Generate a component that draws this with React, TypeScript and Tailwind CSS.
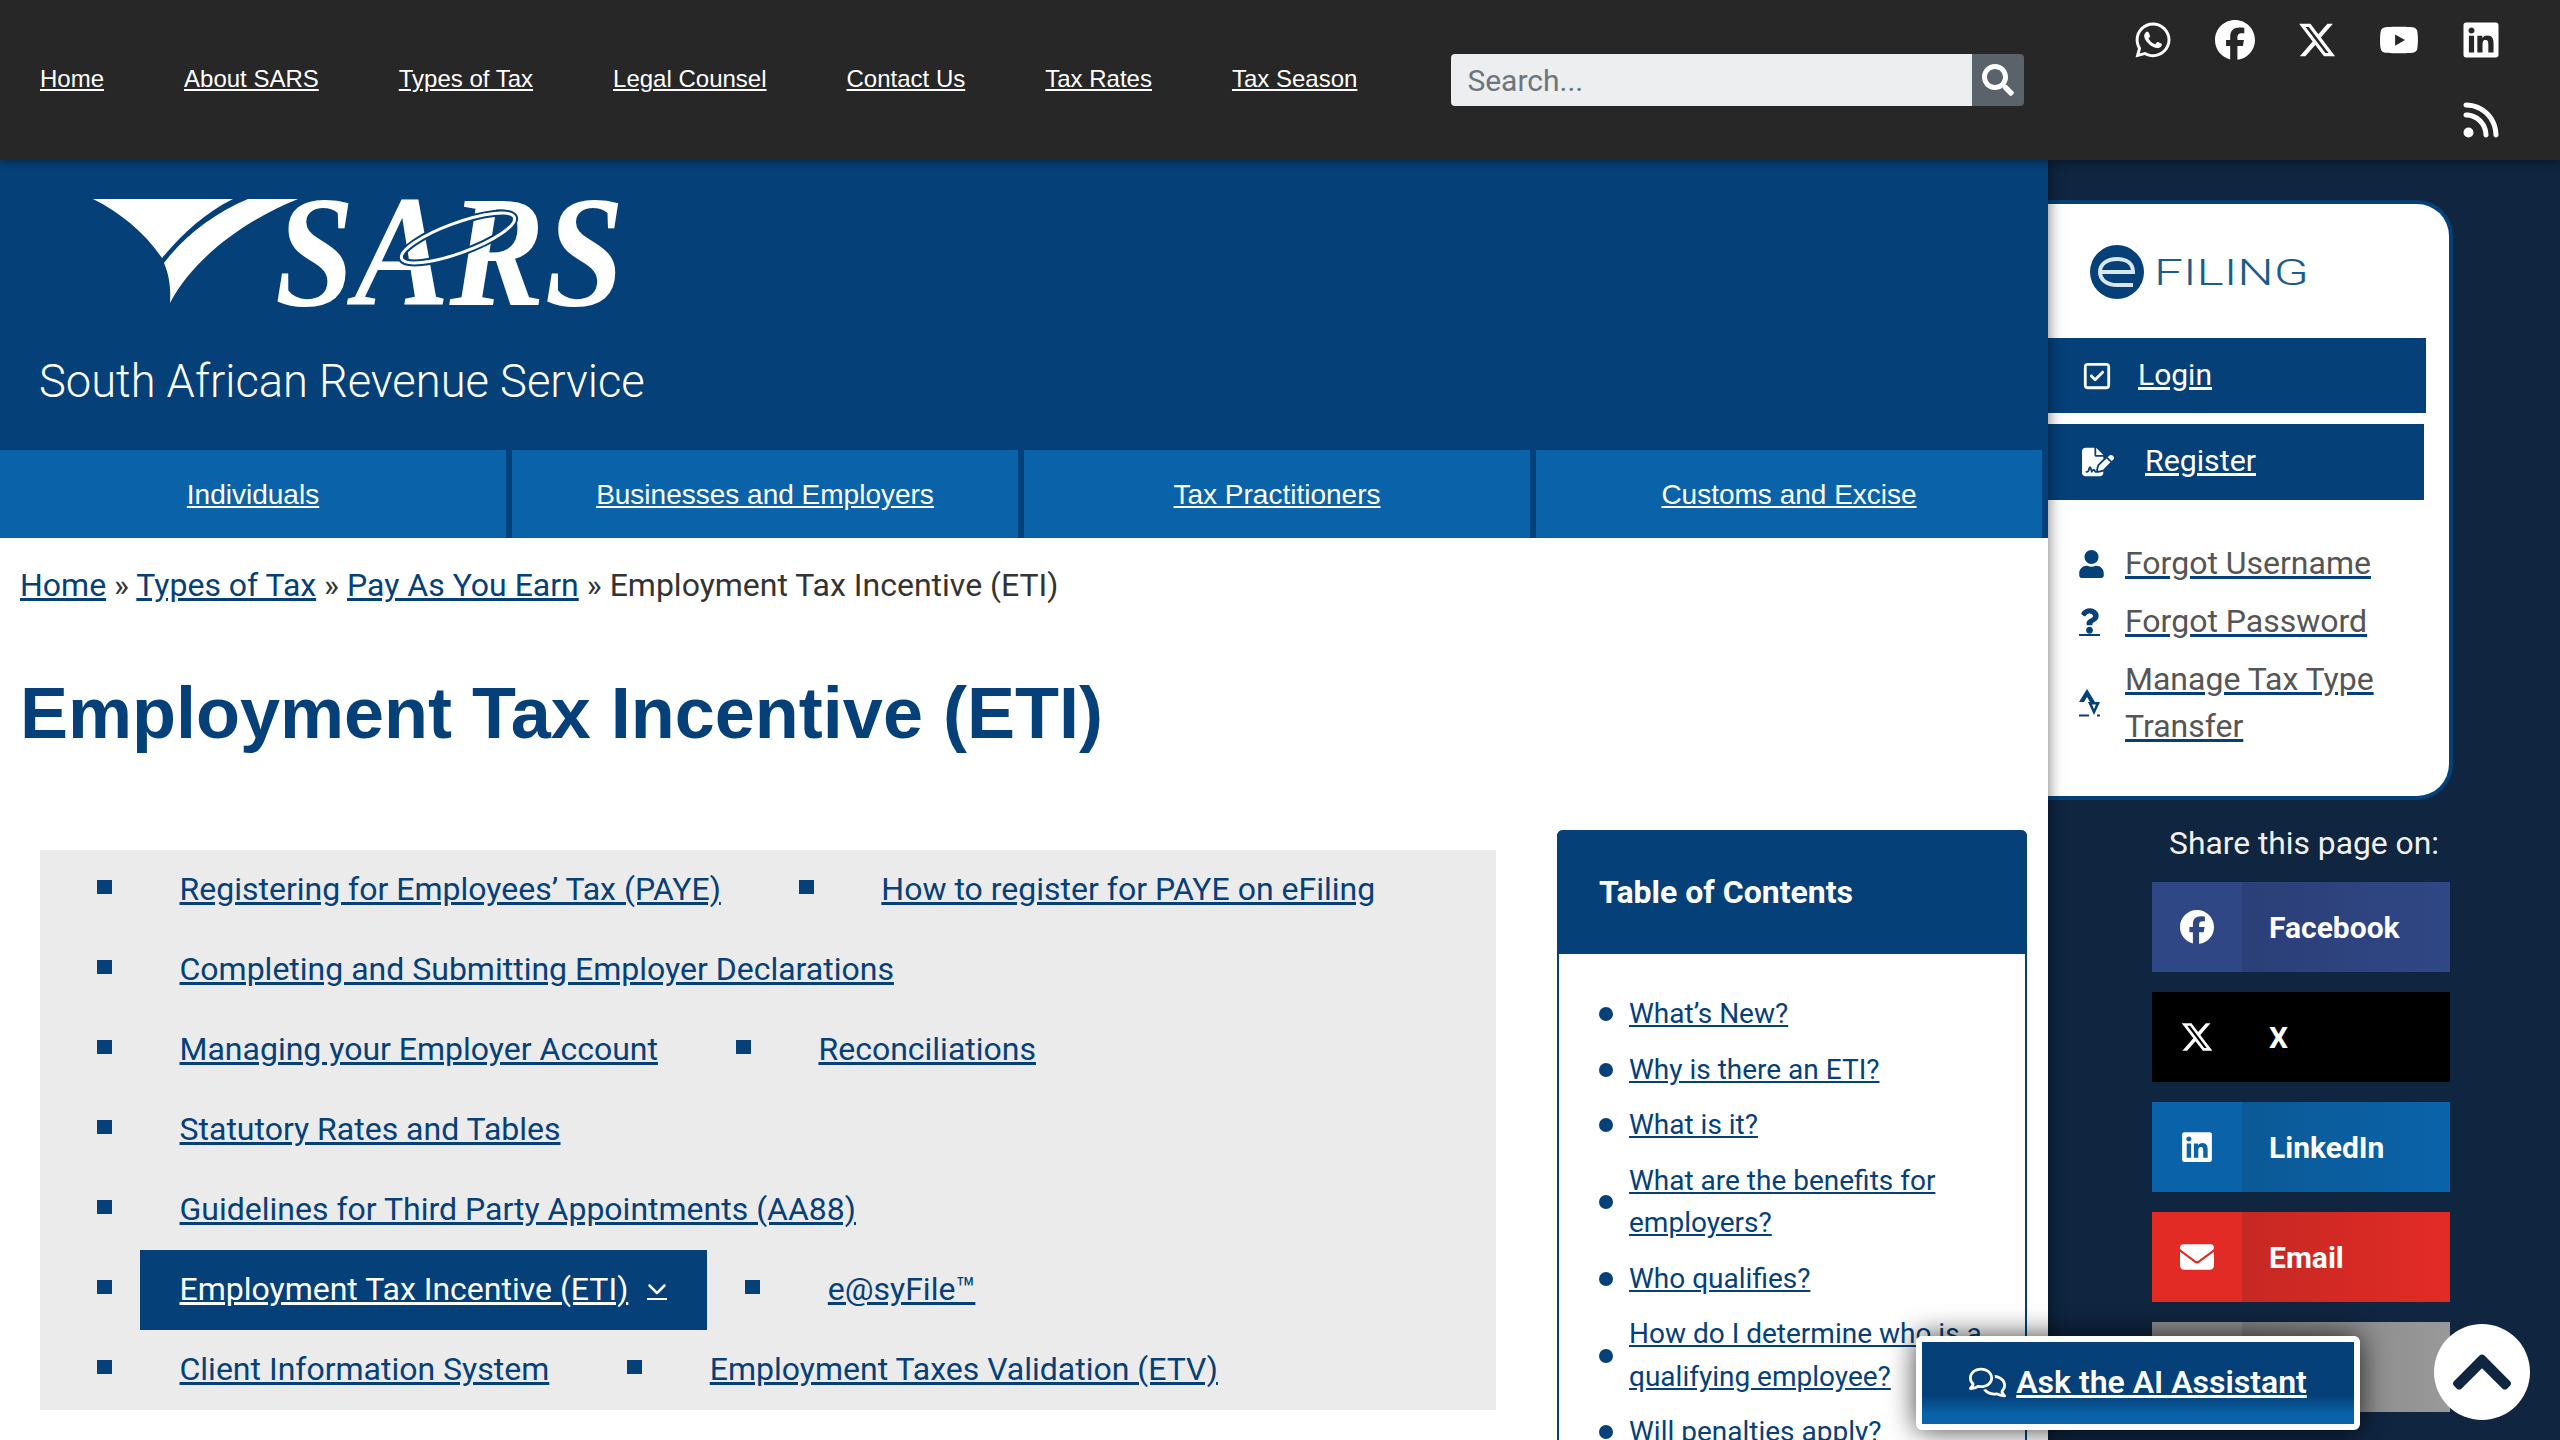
import { FaWhatsapp, FaFacebook, FaXTwitter, FaYoutube, FaLinkedin, FaRss, FaRegSquareCheck, FaFileSignature, FaEnvelope, FaRegComments, FaChevronDown } from 'react-icons/fa6'
import { FaSearch, FaUser, FaQuestion, FaChevronUp } from 'react-icons/fa'

const topLinks = ['Home', 'About SARS', 'Types of Tax', 'Legal Counsel', 'Contact Us', 'Tax Rates', 'Tax Season']
const mainNav = ['Individuals', 'Businesses and Employers', 'Tax Practitioners', 'Customs and Excise']

const subNav = [
  ['Registering for Employees’ Tax (PAYE)', 'How to register for PAYE on eFiling'],
  ['Completing and Submitting Employer Declarations'],
  ['Managing your Employer Account', 'Reconciliations'],
  ['Statutory Rates and Tables'],
  ['Guidelines for Third Party Appointments (AA88)'],
  ['Employment Tax Incentive (ETI)', 'e@syFile™'],
  ['Client Information System', 'Employment Taxes Validation (ETV)'],
]

const toc = [
  'What’s New?',
  'Why is there an ETI?',
  'What is it?',
  'What are the benefits for employers?',
  'Who qualifies?',
  'How do I determine who is a qualifying employee?',
  'Will penalties apply?',
]

function SarsLogo() {
  return (
    <svg width="540" height="112" viewBox="0 0 540 112" className="block overflow-visible">
      <path d="M0 0 H140 C112 14 90 34 69 59 C52 34 28 14 0 0 Z" fill="#fff" />
      <path d="M155 0 H205 C150 22 100 60 77 104 C78 88 76 76 71 64 C92 36 122 14 155 0 Z" fill="#fff" />
      <text x="182" y="106" fontFamily="Liberation Serif" fontStyle="italic" fontWeight="700" fontSize="158" fill="#fff" textLength="349" lengthAdjust="spacingAndGlyphs">SARS</text>
      <ellipse cx="365" cy="39" rx="60" ry="15" transform="rotate(-20 365 39)" fill="none" stroke="#054078" strokeWidth="7" />
      <ellipse cx="365" cy="39" rx="60" ry="15" transform="rotate(-20 365 39)" fill="none" stroke="#fff" strokeWidth="3" />
    </svg>
  )
}

function EfilingLogo() {
  return (
    <svg width="222" height="56" viewBox="0 0 222 56" className="block">
      <circle cx="27" cy="28" r="27" fill="#054078" />
      <path d="M11 28 H43 C43 19 36 15 27 15 C17 15 10 20 10 28 C10 36 17 41 27 41 H43" fill="none" stroke="#d8e6f0" strokeWidth="4" />
      <text x="64" y="41" fontFamily="Roboto" fontWeight="300" fontSize="36" fill="#1b5c8c" textLength="155" lengthAdjust="spacingAndGlyphs">FILING</text>
    </svg>
  )
}

function TransferIcon() {
  return (
    <svg width="21" height="28" viewBox="0 0 21 28" className="block">
      <path d="M8 0 L16 13 H11 L8 8 L5 13 H0 Z" fill="#054078" />
      <path d="M9 13 H21 L15 26 Z M13 15.5 L15 20 L17 15.5 Z" fill="#054078" fillRule="evenodd" />
      <path d="M0 26.5 H10 M18 26.5 H21" stroke="#054078" strokeWidth="2" />
    </svg>
  )
}

function ShareButton({ label, icon, cell, labelBg }: { label: string; icon: React.ReactNode; cell: string; labelBg: string }) {
  return (
    <div className="flex h-[90px] w-[298px] items-center text-white">
      <div className={`flex h-full w-[90px] items-center justify-center text-[34px] ${cell}`}>{icon}</div>
      <span className={`flex h-full flex-1 items-center pl-[27px] text-[30px] font-bold ${labelBg}`}>{label}</span>
    </div>
  )
}

export default function App() {
  return (
    <div className="relative flex h-screen w-full flex-col overflow-hidden bg-[#0f2540] [font-family:Roboto,sans-serif]">
      {/* top bar */}
      <header className="relative z-20 flex h-[160px] shrink-0 bg-[#272727] shadow-[0_2px_8px_rgba(0,0,0,0.4)]">
        <nav className="flex h-full items-center gap-[80px] pb-[2px] pl-[40px] [font-family:'Liberation_Sans',sans-serif]">
          {topLinks.map((l) => (
            <a key={l} className="whitespace-nowrap text-[24px] text-white underline">{l}</a>
          ))}
        </nav>
        <div className="ml-[94px] mt-[54px] flex h-[52px] w-[573px] overflow-hidden rounded-[4px]">
          <input placeholder="Search..." className="h-full min-w-0 flex-1 bg-[#eceef0] pl-[16px] text-[30px] placeholder:text-[#6c757d]" />
          <div className="flex h-full w-[52px] items-center justify-center bg-[#5a626a] text-[32px] text-white">
            <FaSearch />
          </div>
        </div>
        <div className="ml-auto mr-[38px] flex w-[410px] flex-wrap justify-end text-[40px] text-white">
          {[FaWhatsapp, FaFacebook, FaXTwitter, FaYoutube, FaLinkedin, FaRss].map((Icon, i) => (
            <div key={i} className="flex h-[79px] w-[82px] items-center justify-center">
              <Icon />
            </div>
          ))}
        </div>
      </header>

      <div className="flex min-h-0 flex-1">
        {/* main column */}
        <main className="relative z-10 w-[2048px] shrink-0 bg-white shadow-[0_0_14px_rgba(0,0,0,0.55)]">
          <div className="h-[290px] bg-[#054078] pl-[39px] pt-[39px]">
            <div className="ml-[54px]">
              <SarsLogo />
            </div>
            <p className="mt-[41px] text-[45.3px] font-light leading-[60px] text-white">South African Revenue Service</p>
          </div>
          <div className="flex h-[88px] gap-[6px] bg-[#054078] pr-[6px] [font-family:'Liberation_Sans',sans-serif]">
            {mainNav.map((l) => (
              <a key={l} className="flex flex-1 items-center justify-center bg-[#0a63a9] pt-[2px] text-[28px] text-white underline">{l}</a>
            ))}
          </div>

          <p className="ml-[20px] mt-[28px] text-[32px] leading-[38px] text-[#333]">
            <a className="text-[#054078] underline">Home</a> » <a className="text-[#054078] underline">Types of Tax</a> » <a className="text-[#054078] underline">Pay As You Earn</a> » Employment Tax Incentive (ETI)
          </p>
          <h1 className="ml-[20px] mt-[59px] text-[72px] font-bold leading-[100px] text-[#054078] [font-family:'Liberation_Sans',sans-serif]">Employment Tax Incentive (ETI)</h1>

          <div className="mt-[87px] flex items-start">
            <div className="ml-[40px] h-[560px] w-[1456px] shrink-0 bg-[#ebebeb] pl-[57px]">
              {subNav.map((row) => (
                <div key={row[0]} className="flex h-[80px] items-center">
                  {row.map((item) => {
                    const active = item === 'Employment Tax Incentive (ETI)'
                    return (
                      <div key={item} className="mr-[38px] flex h-full items-center">
                        <span className="mb-[6px] mr-[27.5px] h-[14px] w-[15px] bg-[#054078]" />
                        <a className={`flex h-full items-center whitespace-nowrap px-[40px] pb-[2px] text-[32px] underline ${active ? 'bg-[#054078] text-white' : 'text-[#054078]'}`}>
                          {item}
                          {active && (
                            <span className="ml-[19px] border-b-2 border-white text-[20px]">
                              <FaChevronDown />
                            </span>
                          )}
                        </a>
                      </div>
                    )
                  })}
                </div>
              ))}
            </div>

            <aside className="-mt-[20px] ml-[61px] w-[470px] shrink-0 rounded-t-[6px] border-x-2 border-[#054078] pb-[40px]">
              <div className="-mx-[2px] flex h-[124px] items-center rounded-t-[6px] bg-[#054078] pl-[42px] text-[32px] font-bold text-white">Table of Contents</div>
              <ul className="ml-[40px] mr-[20px] mt-[39px] flex flex-col gap-[13px]">
                {toc.map((t) => (
                  <li key={t} className="flex items-center">
                    <span className="mr-[16px] h-[14px] w-[14px] shrink-0 rounded-full bg-[#054078]" />
                    <a className="text-[28px] leading-[42.5px] text-[#054078] underline">{t}</a>
                  </li>
                ))}
              </ul>
            </aside>
          </div>
        </main>

        {/* right column */}
        <div className="flex-1">
          <div className="mt-[40px] h-[600px] w-[405px] rounded-r-[36px] border-y-4 border-r-4 border-[#054078] bg-white">
            <div className="pl-[42px] pt-[40px]">
              <EfilingLogo />
            </div>
            <a className="mt-[38px] flex h-[75px] w-[378px] items-center bg-[#054078] pl-[34px] text-[30px] text-white">
              <FaRegSquareCheck className="text-[30px]" />
              <span className="mb-[2px] ml-[26px] underline">Login</span>
            </a>
            <a className="mt-[11px] flex h-[76px] w-[376px] items-center bg-[#054078] pl-[34px] text-[30px] text-white">
              <FaFileSignature className="text-[32px]" />
              <span className="mb-[3px] ml-[31px] text-[30.3px] underline">Register</span>
            </a>
            <ul className="ml-[31px] mt-[40px] flex flex-col gap-[11px] text-[32px] leading-[47px] text-[#555]">
              <li className="flex items-center">
                <span className="w-[46px]"><FaUser className="h-[28px] w-[25px] text-[#054078]" /></span>
                <a className="underline decoration-[#054078]">Forgot Username</a>
              </li>
              <li className="flex items-center">
                <span className="w-[46px]">
                  <span className="flex w-[21px] justify-center border-b-2 border-[#054078]"><FaQuestion className="h-[26px] w-[19px] text-[#054078]" /></span>
                </span>
                <a className="underline decoration-[#054078]">Forgot Password</a>
              </li>
              <li className="flex items-center">
                <span className="w-[46px]"><TransferIcon /></span>
                <a className="w-[260px] underline decoration-[#054078]">Manage Tax Type Transfer</a>
              </li>
            </ul>
          </div>
          <p className="ml-[121px] mt-[21px] text-[31.8px] leading-[44px] text-[#f1f1f1]">Share this page on:</p>
          <div className="ml-[104px] mt-[17px] flex flex-col gap-[20px]">
            <ShareButton label="Facebook" icon={<FaFacebook />} cell="bg-[#304785]" labelBg="bg-linear-to-r from-[#2b3f78] to-[#304785]" />
            <ShareButton label="X" icon={<FaXTwitter />} cell="bg-black" labelBg="bg-black" />
            <ShareButton label="LinkedIn" icon={<FaLinkedin />} cell="bg-[#0a63a9]" labelBg="bg-linear-to-r from-[#0b5996] to-[#0a63a9]" />
            <ShareButton label="Email" icon={<FaEnvelope />} cell="bg-[#e32b26]" labelBg="bg-linear-to-r from-[#c62823] to-[#e32b26]" />
            <ShareButton label="" icon={null} cell="bg-[#8f8f8f]" labelBg="bg-linear-to-r from-[#808080] to-[#999]" />
          </div>
        </div>
      </div>

      {/* floating buttons */}
      <a className="absolute left-[1916px] top-[1336px] z-30 flex h-[94px] w-[444px] items-center justify-center rounded-[6px] border-[6px] border-white bg-linear-to-b from-[#054078] from-65% to-[#0a63a9] to-88% pb-[2px] text-[32px] font-semibold text-white shadow-[0_0_28px_rgba(0,0,0,0.75)]">
        <FaRegComments className="mr-[10px] text-[37px]" />
        <span className="underline">Ask the AI Assistant</span>
      </a>
      <button className="absolute left-[2434px] top-[1324px] z-30 flex h-[96px] w-[96px] items-center justify-center rounded-full bg-white text-[68px] text-[#0f2540]">
        <FaChevronUp />
      </button>
    </div>
  )
}
